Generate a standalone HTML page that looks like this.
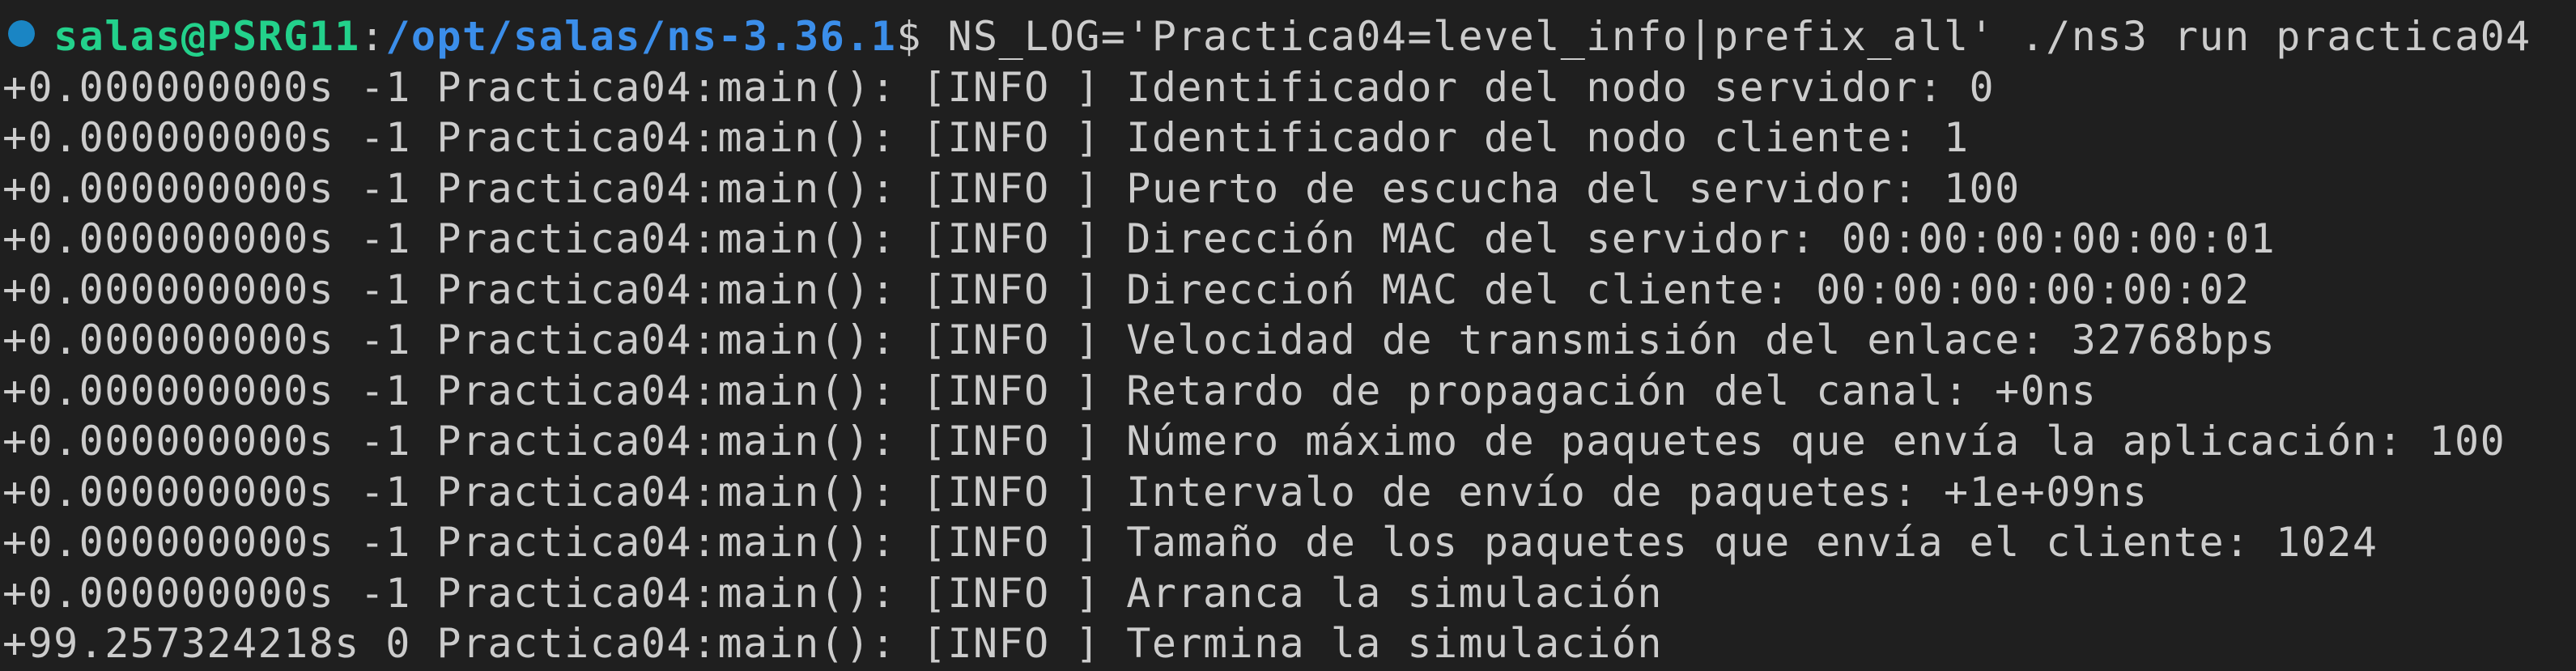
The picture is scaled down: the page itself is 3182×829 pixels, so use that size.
<!DOCTYPE html>
<html><head><meta charset="utf-8"><style>
html,body{margin:0;padding:0;background:#1f1f1f;width:3182px;height:829px;overflow:hidden}
pre{position:absolute;left:3px;top:14px;margin:0;font-family:"DejaVu Sans Mono","Liberation Mono",monospace;font-size:50px;letter-spacing:1.45px;line-height:62.5px;color:#cccccc}
.g{color:#23d18b;font-weight:bold}.b{color:#3b8eea;font-weight:bold}
.dot{position:absolute;left:10px;top:25px;width:33px;height:33px;border-radius:50%;background:#1a85c4}
</style></head><body>
<div class="dot"></div>
<pre>  <span class="g">salas@PSRG11</span>:<span class="b">/opt/salas/ns-3.36.1</span>$ NS_LOG='Practica04=level_info|prefix_all' ./ns3 run practica04
+0.000000000s -1 Practica04:main(): [INFO ] Identificador del nodo servidor: 0
+0.000000000s -1 Practica04:main(): [INFO ] Identificador del nodo cliente: 1
+0.000000000s -1 Practica04:main(): [INFO ] Puerto de escucha del servidor: 100
+0.000000000s -1 Practica04:main(): [INFO ] Dirección MAC del servidor: 00:00:00:00:00:01
+0.000000000s -1 Practica04:main(): [INFO ] Direccioń MAC del cliente: 00:00:00:00:00:02
+0.000000000s -1 Practica04:main(): [INFO ] Velocidad de transmisión del enlace: 32768bps
+0.000000000s -1 Practica04:main(): [INFO ] Retardo de propagación del canal: +0ns
+0.000000000s -1 Practica04:main(): [INFO ] Número máximo de paquetes que envía la aplicación: 100
+0.000000000s -1 Practica04:main(): [INFO ] Intervalo de envío de paquetes: +1e+09ns
+0.000000000s -1 Practica04:main(): [INFO ] Tamaño de los paquetes que envía el cliente: 1024
+0.000000000s -1 Practica04:main(): [INFO ] Arranca la simulación
+99.257324218s 0 Practica04:main(): [INFO ] Termina la simulación</pre>
</body></html>
